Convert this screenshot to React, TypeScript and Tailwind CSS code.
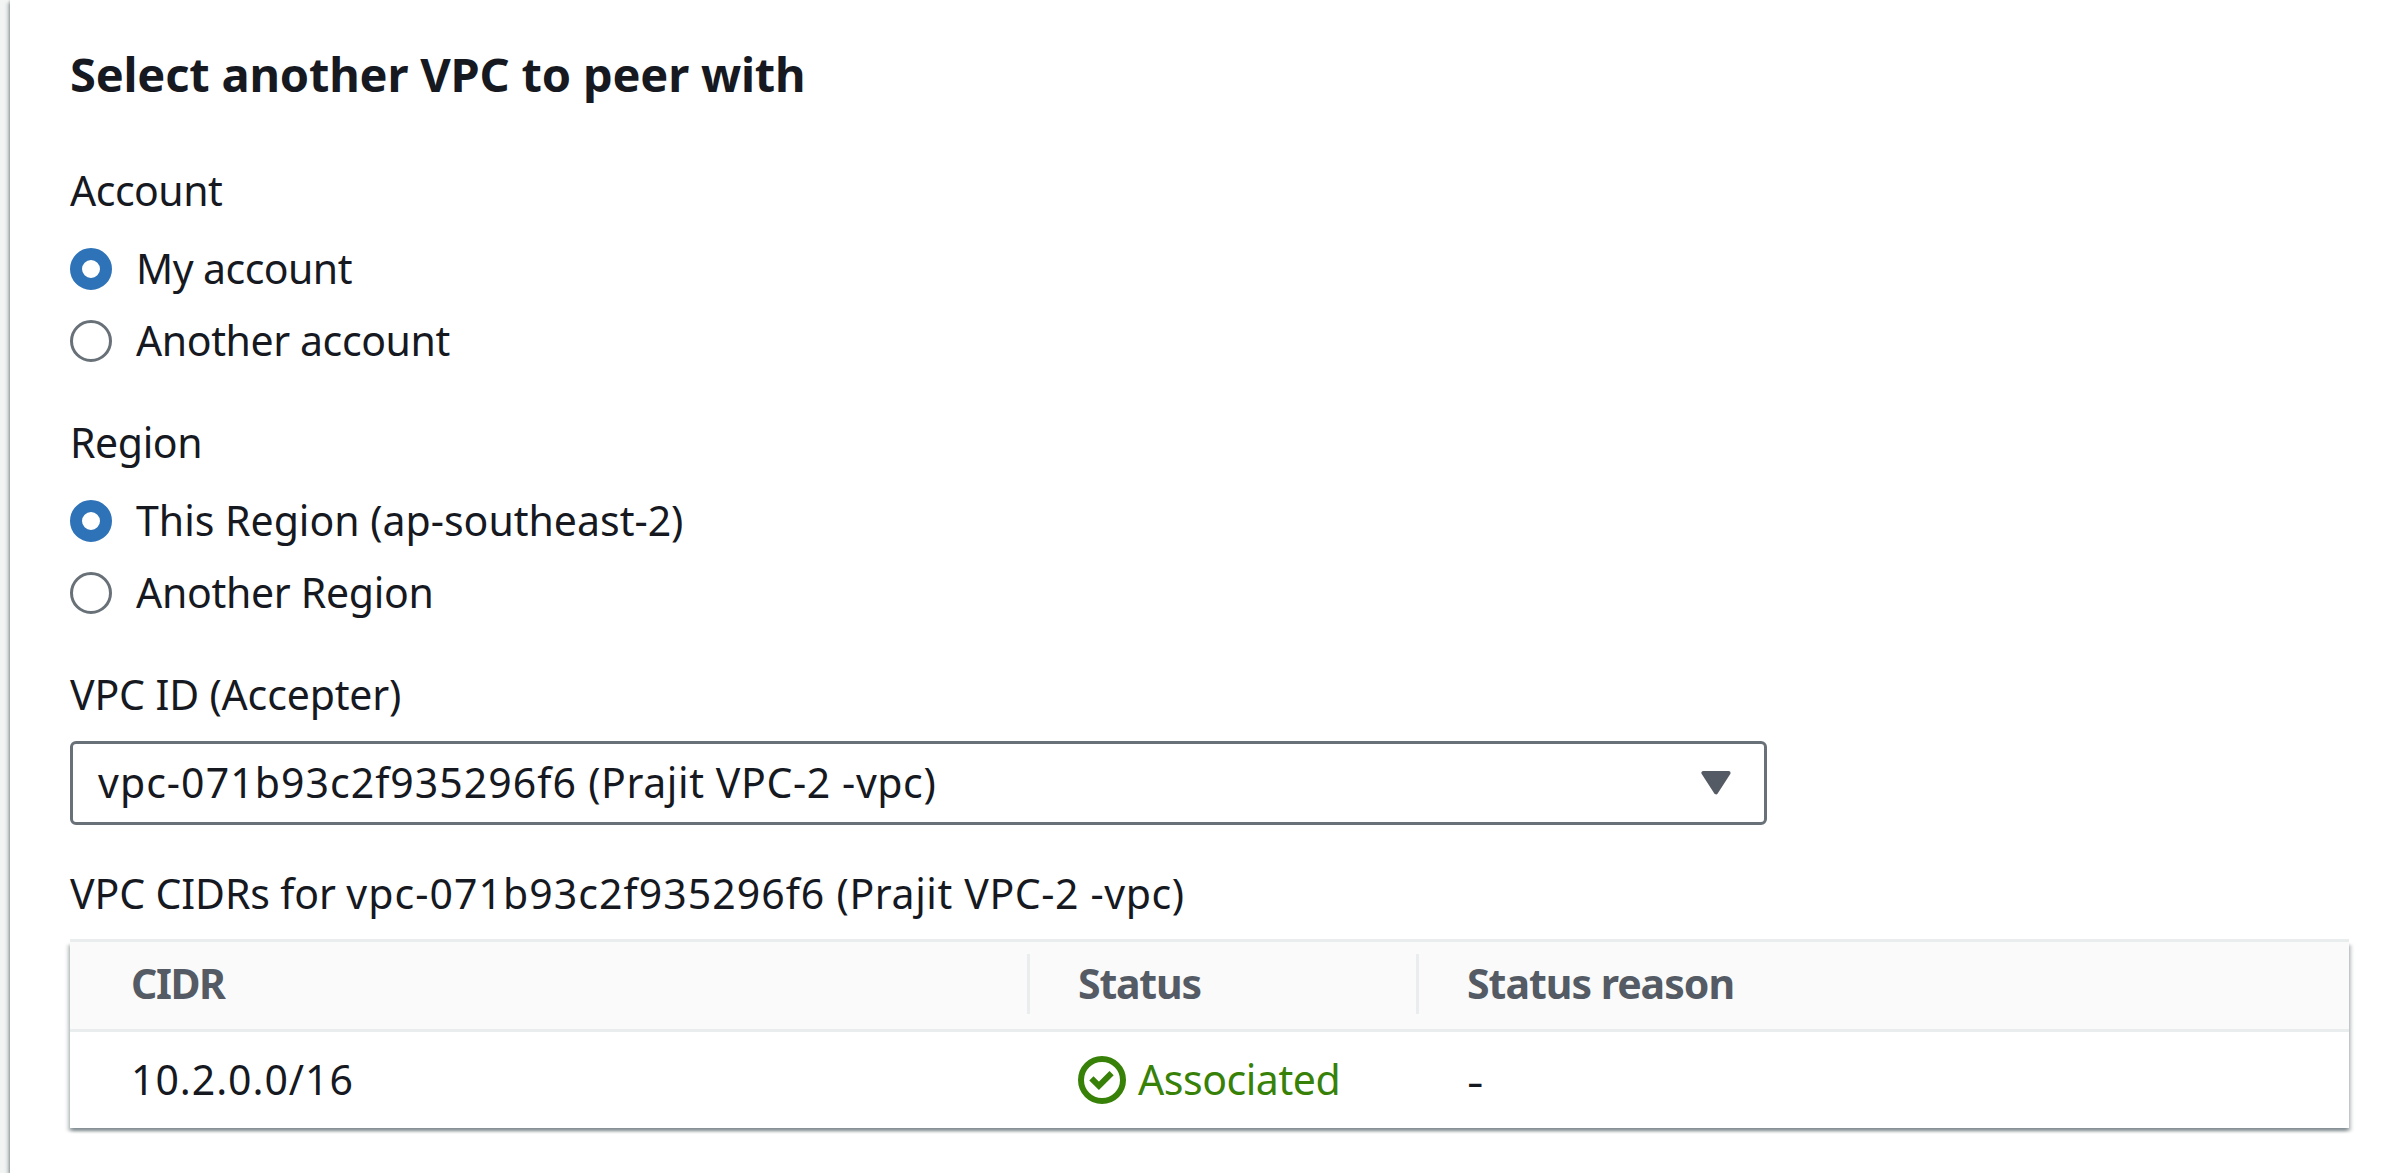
import type { ReactNode } from "react";

function Radio({ checked, children }: { checked?: boolean; children: ReactNode }) {
  return (
    <label className="flex h-[66px] items-center gap-6">
      <span
        className={
          checked
            ? "mt-0.5 box-border size-[42px] shrink-0 rounded-full border-[12.5px] border-[#2e73b8] bg-white"
            : "mt-0.5 box-border size-[42px] shrink-0 rounded-full border-[3px] border-[#687078] bg-white"
        }
      />
      {children}
    </label>
  );
}

function CheckCircle() {
  return (
    <svg className="size-12 shrink-0" viewBox="0 0 48 48" fill="none" stroke="#388108" strokeWidth="6">
      <circle cx="24" cy="24" r="21" />
      <path d="M13.4 22.3 20.9 29.8 33.6 17.1" />
    </svg>
  );
}

function VpcName() {
  return (
    <>
      <span className="tracking-[1.05px]">vpc-071b93c2f935296f6</span>
      <span className="tracking-[0.6px]"> (Prajit VPC-2 -vpc)</span>
    </>
  );
}

export default function App() {
  return (
    <div className="h-[1173px] overflow-hidden bg-[#f2f3f3] pl-[10px] font-['Noto_Sans',sans-serif] text-[41px] leading-[66px] whitespace-nowrap text-[#16191f]">
      <main className="h-full bg-white pl-[60px] shadow-[0_3px_3px_rgba(0,28,36,0.3),3px_3px_3px_rgba(0,28,36,0.15),-3px_3px_3px_rgba(0,28,36,0.15),-1px_0_2px_rgba(0,28,36,0.15)]">
        <h1 className="pt-[41px] text-[47px] leading-[66px] font-bold tracking-[-0.2px]">Select another VPC to peer with</h1>

        <section className="mt-[50px]">
          <div className="tracking-[-0.5px]">Account</div>
          <div className="mt-3 flex flex-col gap-1.5">
            <Radio checked>
              <span className="tracking-[-0.55px]">My account</span>
            </Radio>
            <Radio>
              <span className="tracking-[-0.4px]">Another account</span>
            </Radio>
          </div>
        </section>

        <section className="mt-9">
          <div className="tracking-[-0.4px]">Region</div>
          <div className="mt-3 flex flex-col gap-1.5">
            <Radio checked>
              <span>This Region (ap-southeast-2)</span>
            </Radio>
            <Radio>
              <span className="tracking-[-0.3px]">Another Region</span>
            </Radio>
          </div>
        </section>

        <section className="mt-9">
          <div className="tracking-[-0.15px]">VPC ID (Accepter)</div>
          <div className="mt-[14px] flex h-[84px] w-[1697px] items-center justify-between rounded-[6px] border-[3px] border-[#687078] pr-[33px] pl-[25px]">
            <span className="-mt-0.5">
              <VpcName />
            </span>
            <svg className="h-6 w-[30px]" viewBox="0 0 30 24" fill="#545b64" stroke="#545b64" strokeWidth="4" strokeLinejoin="round">
              <path d="M2.4 2H27.6L15 21.4Z" />
            </svg>
          </div>
        </section>

        <div className="mt-[35px]">
          <span className="tracking-[-0.12px]">VPC CIDRs for </span>
          <VpcName />
        </div>
        <div className="mt-[13px] w-[2279px]">
          <div className="h-[3px] bg-[#eaeded]" />
          <div className="shadow-[0_3px_3px_rgba(0,28,36,0.3),3px_3px_3px_rgba(0,28,36,0.15),-3px_3px_3px_rgba(0,28,36,0.15)]">
            <div className="grid h-[90px] grid-cols-[960px_389px_1fr] items-start border-b-[3px] border-[#eaeded] bg-[#fafafa] pt-3 font-bold text-[#545b64]">
              <div className="flex h-[60px] items-center border-r-[3px] border-[#eaeded] pl-[61px]">
                <span className="-mt-0.5 tracking-[-1.4px]">CIDR</span>
              </div>
              <div className="flex h-[60px] items-center border-r-[3px] border-[#eaeded] pl-12">
                <span className="-mt-0.5 tracking-[-1.2px]">Status</span>
              </div>
              <div className="flex h-[60px] items-center pl-12">
                <span className="-mt-0.5 tracking-[-1px]">Status reason</span>
              </div>
            </div>
            <div className="grid h-24 grid-cols-[960px_389px_1fr] items-center bg-white">
              <div className="flex pl-[61px]">
                <span className="-mt-0.5 tracking-[0.95px]">10.2.0.0/16</span>
              </div>
              <div className="flex items-center gap-3 pl-12 text-[#388108]">
                <CheckCircle />
                <span className="-mt-0.5 tracking-[-0.45px]">Associated</span>
              </div>
              <div className="flex pl-12">
                <span className="mt-0.5 inline-block origin-left scale-x-125">-</span>
              </div>
            </div>
          </div>
        </div>
      </main>
    </div>
  );
}
